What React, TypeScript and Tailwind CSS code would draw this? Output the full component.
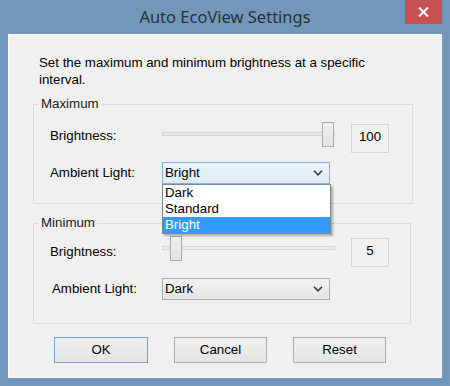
import React from "react";

const body = { fontFamily: '"Liberation Sans", Arial, sans-serif' };

function Chevron() {
  return (
    <svg width="10" height="6" viewBox="0 0 10 6" className="shrink-0">
      <path d="M1 0.8 L5 4.8 L9 0.8" fill="none" stroke="#3a3a3a" strokeWidth="1.6" />
    </svg>
  );
}

function Slider({ value }: { value: number }) {
  // track 172px wide, thumb 12px
  const left = Math.round(((172 - 12) * value) / 100);
  return (
    <div className="relative w-[173px] h-[25px] shrink-0">
      <div className="absolute left-0 right-0 top-[10px] h-[4px] bg-[#e7eaea] border border-[#d6d6d6]" />
      <div
        className="absolute top-0 w-[12px] h-[25px] border border-[#acacac] bg-gradient-to-b from-[#f0f0f0] to-[#e5e5e5]"
        style={{ left }}
      />
    </div>
  );
}

function ValueBox({ text }: { text: string }) {
  return (
    <div className="w-[38px] h-[29px] border border-[#d5d5d5] bg-[#f0f0f0] flex items-center justify-center text-[13.3px] text-black shrink-0 pb-[3px]">
      {text}
    </div>
  );
}

function Legend({ children }: { children: React.ReactNode }) {
  return (
    <legend className="-ml-[11px] px-[2px] text-[13.3px] leading-[16px] text-[#1a1a1a]">
      {children}
    </legend>
  );
}

export default function App() {
  return (
    <div className="w-[450px] h-[386px] bg-[#7197bb] flex flex-col" style={body}>
      {/* Title bar */}
      <div className="relative h-[34px] flex items-center justify-center">
        <span
          className="text-[16.5px] text-[#2b2f33] pt-[1px]"
          style={{ fontFamily: '"Noto Sans", "Open Sans", sans-serif' }}
        >
          Auto EcoView Settings
        </span>
        <div className="absolute right-[8px] top-0 w-[37px] h-[24px] bg-[#c75050] flex items-center justify-center">
          <svg width="11" height="10" viewBox="0 0 11 10">
            <path d="M1 0.5 L10 9.5 M10 0.5 L1 9.5" stroke="#fff" strokeWidth="2" />
          </svg>
        </div>
      </div>

      {/* Client area */}
      <div className="mx-[8px] h-[344px] bg-[#f0f0f0] border border-[#fafafa] flex flex-col">
        <p className="pl-[30px] pt-[19px] text-[13.3px] leading-[17px] text-black">
          Set the maximum and minimum brightness at a specific
          <br />
          interval.
        </p>

        {/* Maximum */}
        <fieldset className="ml-[24px] mt-[8px] w-[380px] border border-[#dcdcdc] pl-[16px] pt-[10px] pb-[19px] relative z-10">
          <Legend>Maximum</Legend>
          <div className="flex items-start h-[31px]">
            <span className="w-[112px] mt-[6px] text-[13.3px] leading-[16px] text-black">Brightness:</span>
            <Slider value={100} />
            <div className="ml-[16px] mt-[2px]">
              <ValueBox text="100" />
            </div>
          </div>
          <div className="flex items-center h-[22px] mt-[9px]">
            <span className="w-[112px] text-[13.3px] leading-[16px] text-black">Ambient Light:</span>
            <div className="relative">
              <div className="w-[168px] h-[22px] border border-[#7eb4ea] bg-gradient-to-b from-[#ecf4fc] to-[#dcecfc] flex items-center justify-between pl-[2px] pr-[6px] text-[13.3px] text-black">
                <span>Bright</span>
                <Chevron />
              </div>
              <div className="absolute left-0 top-[22px] w-[169px] bg-white border border-[#7a8a99] shadow-[2px_2px_2px_rgba(0,0,0,0.28)] text-[13.3px] leading-[16px] text-black">
                <div className="h-[16px] pl-[2px]">Dark</div>
                <div className="h-[16px] pl-[2px]">Standard</div>
                <div className="h-[16px] pl-[2px] bg-[#3399ff] text-white">Bright</div>
              </div>
            </div>
          </div>
        </fieldset>

        {/* Minimum */}
        <fieldset className="ml-[24px] mt-[11px] w-[378px] border border-[#dcdcdc] pl-[16px] pt-[5px] pb-[23px]">
          <Legend>Minimum</Legend>
          <div className="flex items-start h-[30px]">
            <span className="w-[112px] mt-[8px] text-[13.3px] leading-[16px] text-black">Brightness:</span>
            <Slider value={5} />
            <div className="ml-[16px] mt-[2px]">
              <ValueBox text="5" />
            </div>
          </div>
          <div className="flex items-center h-[22px] mt-[12px]">
            <span className="w-[112px] pl-[2px] text-[13.3px] leading-[16px] text-black">Ambient Light:</span>
            <div className="w-[168px] h-[22px] border border-[#acacac] bg-gradient-to-b from-[#f2f2f2] to-[#e5e5e5] flex items-center justify-between pl-[2px] pr-[6px] text-[13.3px] text-black">
              <span>Dark</span>
              <Chevron />
            </div>
          </div>
        </fieldset>

        {/* Buttons */}
        <div className="flex gap-[26px] pl-[45px] mt-[13px]">
          <button className="w-[94px] h-[26px] border border-[#6ea6dc] bg-gradient-to-b from-[#f0f0f0] to-[#e5e5e5] text-[13.3px] text-black">
            OK
          </button>
          <button className="w-[93px] h-[26px] border border-[#acacac] bg-gradient-to-b from-[#f0f0f0] to-[#e5e5e5] text-[13.3px] text-black">
            Cancel
          </button>
          <button className="w-[93px] h-[26px] border border-[#acacac] bg-gradient-to-b from-[#f0f0f0] to-[#e5e5e5] text-[13.3px] text-black">
            Reset
          </button>
        </div>
      </div>
    </div>
  );
}
